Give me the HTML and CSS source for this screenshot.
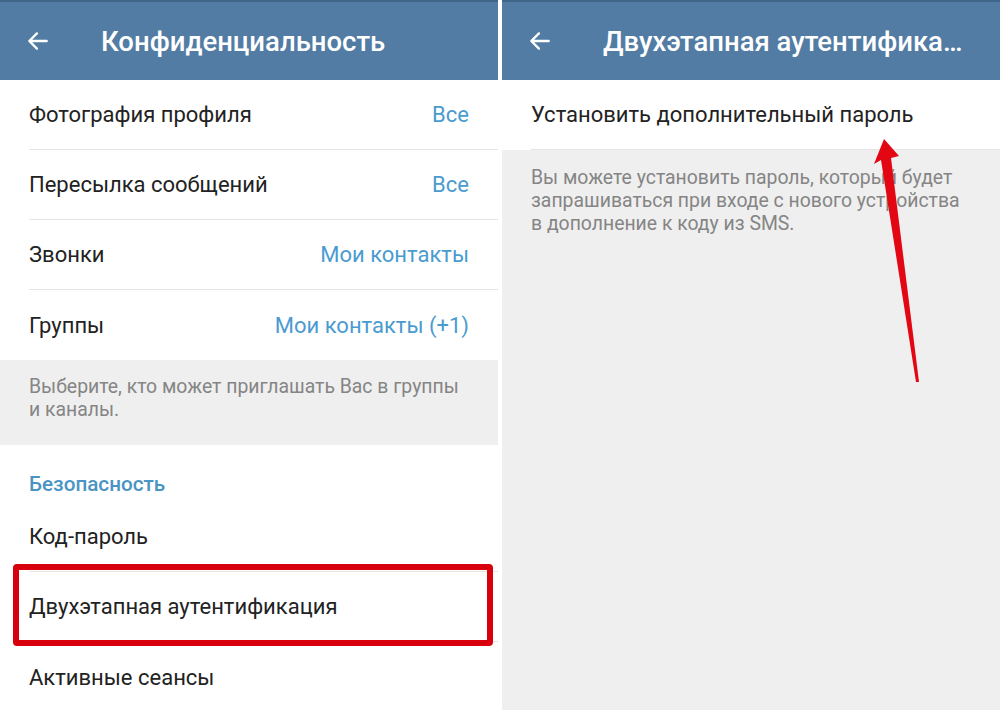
FILE: index.html
```html
<!DOCTYPE html>
<html lang="ru">
  <head>
    <meta charset="UTF-8" />
    <meta name="viewport" content="width=device-width, initial-scale=1.0" />
    <title>Конфиденциальность</title>
    <link rel="stylesheet" href="styles.css">
  </head>
  <body>
    <div class="screens">
      <div class="screen screen-left">
        <div class="header">
          <svg class="back" width="26" height="26" viewBox="0 0 24 24">
            <path d="M20 12H5M11 5l-7 7 7 7" fill="none" stroke="#fff" stroke-width="2.2" stroke-linecap="round" stroke-linejoin="round"/>
          </svg>
          <div class="title">Конфиденциальность</div>
        </div>

        <div class="list">
          <div class="row">
            <span class="label">Фотография профиля</span>
            <span class="value">Все</span>
          </div>
          <div class="row">
            <span class="label">Пересылка сообщений</span>
            <span class="value">Все</span>
          </div>
          <div class="row">
            <span class="label">Звонки</span>
            <span class="value">Мои контакты</span>
          </div>
          <div class="row no-line">
            <span class="label">Группы</span>
            <span class="value">Мои контакты (+1)</span>
          </div>
        </div>

        <div class="hint hint-left">Выберите, кто может приглашать Вас в группы и каналы.</div>

        <div class="list">
          <div class="section-title">Безопасность</div>
          <div class="row">
            <span class="label">Код-пароль</span>
          </div>
          <div class="row marked">
            <span class="label">Двухэтапная аутентификация</span>
            <div class="mark"></div>
          </div>
          <div class="row no-line">
            <span class="label">Активные сеансы</span>
          </div>
        </div>
      </div>

      <div class="screen screen-right">
        <div class="header">
          <svg class="back" width="26" height="26" viewBox="0 0 24 24">
            <path d="M20 12H5M11 5l-7 7 7 7" fill="none" stroke="#fff" stroke-width="2.2" stroke-linecap="round" stroke-linejoin="round"/>
          </svg>
          <div class="title">Двухэтапная аутентификация</div>
        </div>

        <div class="list">
          <div class="row">
            <span class="label">Установить дополнительный пароль</span>
          </div>
        </div>

        <div class="hint hint-right">Вы можете установить пароль, который будет запрашиваться при входе с нового устройства в дополнение к коду из SMS.</div>

        <svg class="arrow" width="60" height="260" viewBox="0 0 60 260">
          <polygon points="24,0 39,17 31,19 59,243 56,243 21,21 14,25" fill="#e30613"/>
        </svg>
      </div>
    </div>
  </body>
</html>
```

FILE: styles.css
```css
body {
  margin: 0;
  padding: 0;
  background-color: #ffffff;
  font-family: Roboto, "Noto Sans", Arial, sans-serif;
}

.screens {
  display: flex;
  gap: 4px;
  width: 1000px;
  height: 710px;
  overflow: hidden;
}

.screen {
  flex: 1;
  min-width: 0;
  background-color: #efefef;
  position: relative;
}

.header {
  height: 78px;
  border-top: 2px solid #3f6589;
  background-color: #527ca3;
  display: flex;
  align-items: center;
  padding-left: 25px;
  padding-right: 35px;
}

.back {
  flex: none;
  margin-right: 50px;
}

.title {
  min-width: 0;
  color: #ffffff;
  font-size: 27.5px;
  font-weight: 500;
  white-space: nowrap;
  overflow: hidden;
  text-overflow: ellipsis;
}

.list {
  background-color: #ffffff;
}

.row {
  height: 70px;
  margin-left: 29px;
  padding-right: 29px;
  display: flex;
  align-items: center;
  justify-content: space-between;
  border-bottom: 1px solid #e4e4e4;
  box-sizing: border-box;
  position: relative;
}

.row.no-line {
  border-bottom: none;
}

.label {
  font-size: 22px;
  color: #222222;
}

.value {
  font-size: 22px;
  color: #4a9bd0;
}

.hint {
  font-size: 19.4px;
  line-height: 23px;
  color: #858585;
}

.hint-left {
  padding: 15px 30px 24px 29px;
}

.hint-right {
  padding: 16px 30px 0 29px;
}

.section-title {
  padding: 27px 0 0 29px;
  height: 30px;
  font-size: 20.7px;
  font-weight: 500;
  color: #4a94c4;
}

.mark {
  position: absolute;
  left: -16px;
  right: 5px;
  top: -8px;
  bottom: -5px;
  border: 6px solid #d8000c;
  border-radius: 4px;
}

.arrow {
  position: absolute;
  left: 358px;
  top: 139px;
}
```
